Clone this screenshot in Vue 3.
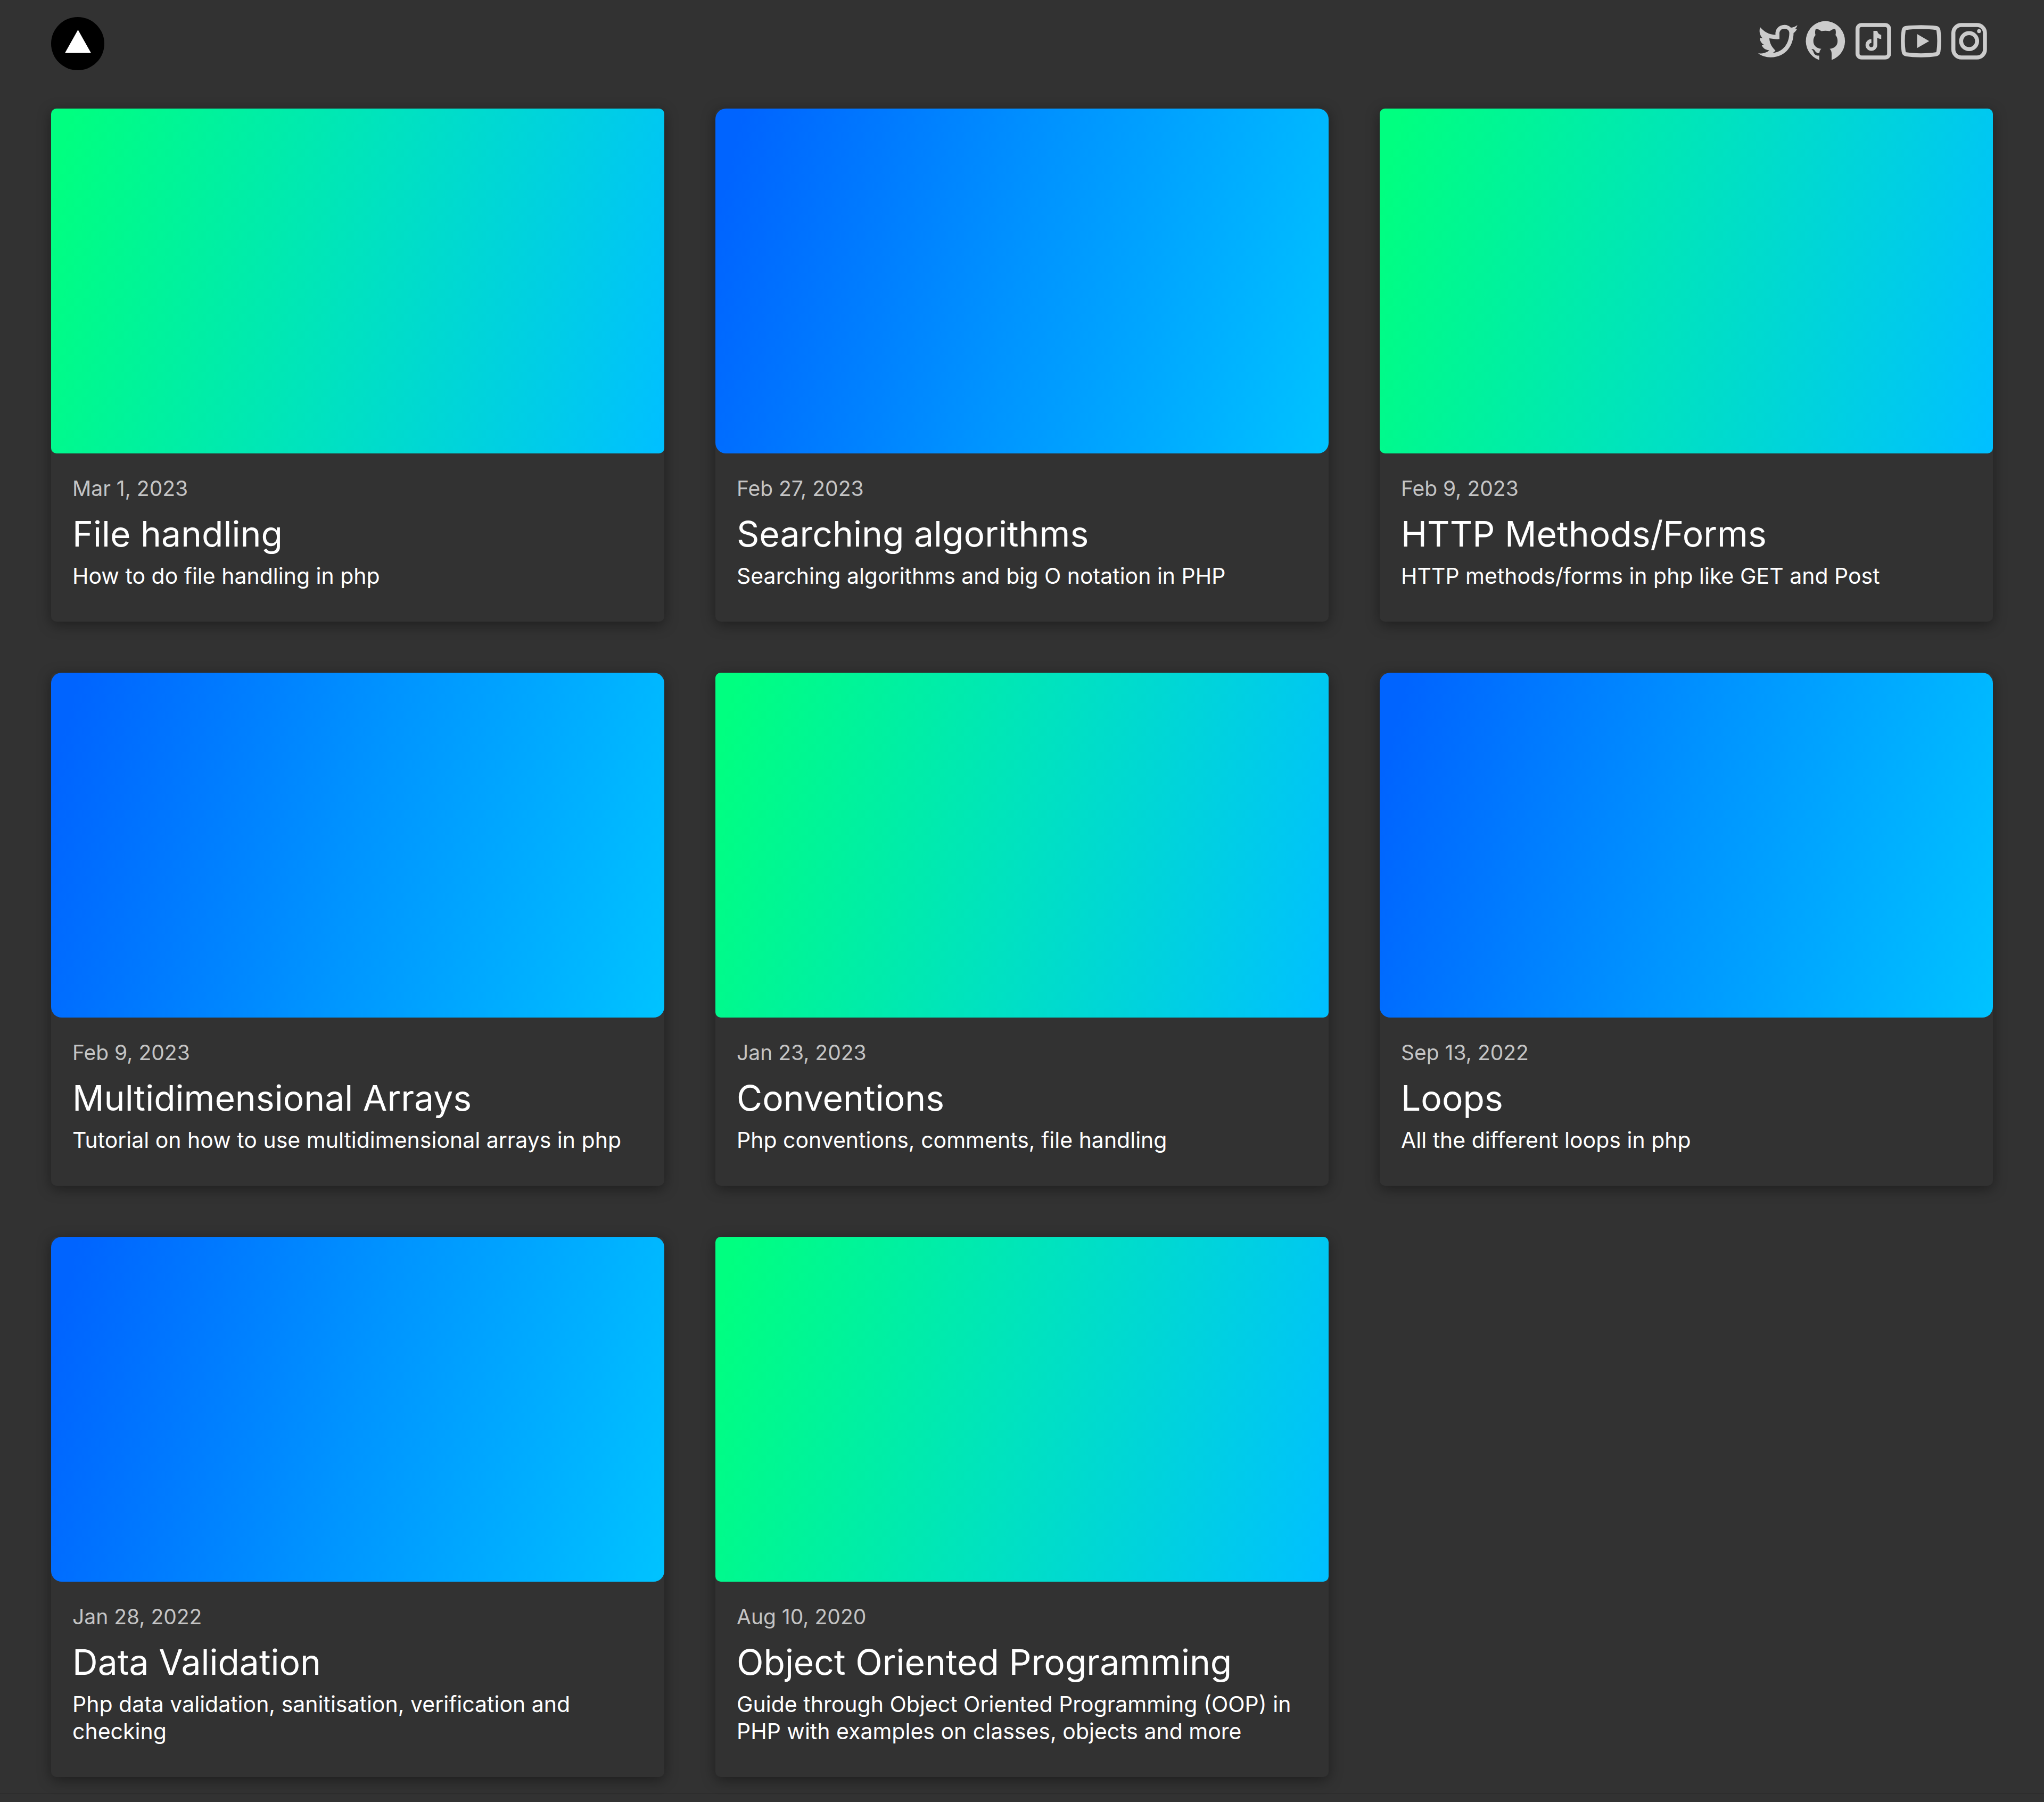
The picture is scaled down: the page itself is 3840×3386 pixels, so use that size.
<script setup>
const posts = [
  { date: 'Mar 1, 2023', title: 'File handling', text: 'How to do file handling in php', tone: 'green' },
  { date: 'Feb 27, 2023', title: 'Searching algorithms', text: 'Searching algorithms and big O notation in PHP', tone: 'blue' },
  { date: 'Feb 9, 2023', title: 'HTTP Methods/Forms', text: 'HTTP methods/forms in php like GET and Post', tone: 'green' },
  { date: 'Feb 9, 2023', title: 'Multidimensional Arrays', text: 'Tutorial on how to use multidimensional arrays in php', tone: 'blue' },
  { date: 'Jan 23, 2023', title: 'Conventions', text: 'Php conventions, comments, file handling', tone: 'green' },
  { date: 'Sep 13, 2022', title: 'Loops', text: 'All the different loops in php', tone: 'blue' },
  { date: 'Jan 28, 2022', title: 'Data Validation', text: 'Php data validation, sanitisation, verification and checking', tone: 'blue' },
  { date: 'Aug 10, 2020', title: 'Object Oriented Programming', text: 'Guide through Object Oriented Programming (OOP) in PHP with examples on classes, objects and more', tone: 'green' },
]
</script>

<template>
  <div class="page">
    <header class="bar">
      <a class="logo" href="#" aria-label="Home">
        <svg viewBox="0 0 100 100" width="100" height="100">
          <circle cx="50" cy="50" r="50" fill="#000" />
          <path d="M50.500 24 75 67.500H26Z" fill="#fff" />
        </svg>
      </a>
      <nav class="social" aria-label="Social links">
        <a href="#" aria-label="Twitter">
          <svg viewBox="0 0 90 90">
            <path fill-rule="evenodd" d="M12.700 19C20 27.500 29 33 41.500 33.500C40.500 23 47.500 14.700 58.500 14.700C63.500 14.700 67.500 16.700 70.500 20C75 19.500 79 18 82.700 15.300C82 18 80.500 20.500 78.500 22.500L82.300 22C80.500 25.500 78.500 28 75.500 30C75.500 51 62.500 75.700 32.500 75.700C23.500 75.700 15.500 73 9 68.300C16.500 69 24.500 67.500 30 62.500C23 62 18 58.500 15.800 53L20.500 52.500C15 49.500 12 44.500 12.300 39L17.500 40C11.500 34 10.500 26 12.700 19ZM49 41.500C42.500 42 35.500 41 30 40C30.500 49.500 34.500 56 41.500 63C39.500 65.500 38 66.500 36 67.500C55.500 66 67.500 50 67.500 30C67.500 25 63.500 22 58.500 22C51.500 22 48.500 27 49 32Z" />
          </svg>
        </a>
        <a href="#" aria-label="GitHub">
          <svg viewBox="0 0 90 90">
            <path d="M45.300 7.400A37.800 37.800 0 0 0 33.700 80.800V72.500C28 73 24.500 70.500 23.300 66.500C22.500 63.500 21 61.800 19 60.800C21 59.800 23.500 60.200 25 62.500C27.500 66.500 29.800 68.500 34 67.500C34.300 64.500 35.500 61.500 37.700 59.800C28.500 58.500 22.700 54 22.700 45C22.700 40.500 24 37 26.700 34C25.600 30 25.700 26 27.200 22.200C31 22.300 34.500 24 37.800 26.600A34 34 0 0 1 53.200 26.600C56.500 24 60 22.300 63.800 22.200C65.200 26 65.300 30 64.300 34C67 37 68.200 40.500 68.200 45C68.200 54 62.500 58.500 53.300 59.800C56 62 57 65 57 69V80.800A37.800 37.800 0 0 0 45.300 7.400Z" />
          </svg>
        </a>
        <a href="#" aria-label="TikTok">
          <svg viewBox="0 0 90 90">
            <rect x="15.700" y="15" width="59.300" height="61" rx="7.500" fill="none" stroke="#ccc" stroke-width="7.500" />
            <path d="M45.500 26h7.200c1 4.500 3.500 7 7.500 7.500v7.800c-3 0-5.500-1-7.500-2.500v13.700a11 11 0 1 1-11-11v7.300a4 4 0 1 0 3.800 4Z" />
          </svg>
        </a>
        <a href="#" aria-label="YouTube">
          <svg viewBox="0 0 90 90">
            <path fill="none" stroke="#ccc" stroke-width="7.500" d="M17 20.500C32 18.500 58 18.500 73 20.500Q77 21 77.700 25C79.500 37 79.500 53 77.700 65Q77 69.500 73 70C58 72.500 32 72.500 17 70Q13 69.500 12.300 65C10.500 53 10.500 37 12.300 25Q13 21 17 20.500Z" />
            <path d="M37.700 32 60.300 45.300 37.700 58.300Z" />
          </svg>
        </a>
        <a href="#" aria-label="Instagram">
          <svg viewBox="0 0 90 90">
            <rect x="15.700" y="15" width="59.300" height="61" rx="15" fill="none" stroke="#ccc" stroke-width="7.500" />
            <circle cx="45.300" cy="45.300" r="15" fill="none" stroke="#ccc" stroke-width="7.500" />
            <circle cx="64" cy="26.500" r="3.700" />
          </svg>
        </a>
      </nav>
    </header>

    <main class="grid">
      <a v-for="post in posts" :key="post.title" class="card" href="#">
        <div class="cover" :class="post.tone"></div>
        <div class="body">
          <time class="date">{{ post.date }}</time>
          <h2 class="title">{{ post.title }}</h2>
          <p class="text">{{ post.text }}</p>
        </div>
      </a>
    </main>
    <footer class="foot"></footer>
  </div>
</template>

<style>
body {
  margin: 0;
  background: #323232;
}
</style>

<style scoped>
.page {
  color: #fff;
  font-family: Inter, "Open Sans", sans-serif;
}
.bar {
  display: flex;
  justify-content: space-between;
  padding: 32px 96px 0;
  height: 132px;
}
.logo,
.logo svg {
  display: block;
}
.social {
  display: flex;
}
.social a {
  display: block;
  width: 90px;
  height: 90px;
}
.social svg {
  display: block;
  fill: #ccc;
}
.grid {
  display: grid;
  grid-template-columns: repeat(3, 1fr);
  gap: 96px;
  padding: 40px 96px 30px;
}
.card {
  display: block;
  border-radius: 10px;
  color: inherit;
  text-decoration: none;
  box-shadow: 0 6px 26px rgba(0, 0, 0, 0.4);
}
.cover {
  aspect-ratio: 16 / 9;
}
.green {
  border-radius: 10px;
  background: linear-gradient(104deg, #00ff80 3%, #00e2c0 50%, #00c0ff 99%);
}
.blue {
  border-radius: 20px;
  background: linear-gradient(104deg, #0064ff 4%, #0094ff 50%, #00c3ff);
}
.body {
  padding: 40px 40px 60px;
}
.date {
  display: block;
  color: #c4c4c4;
  font-size: 39px;
  line-height: 51px;
}
.title {
  margin: 20px 0 14px;
  font-size: 66px;
  font-weight: 400;
  line-height: 80px;
}
.text {
  margin: 0;
  font-size: 41px;
  line-height: 51px;
}
.foot {
  border-top: 1px solid #282828;
  height: 16px;
}
</style>
